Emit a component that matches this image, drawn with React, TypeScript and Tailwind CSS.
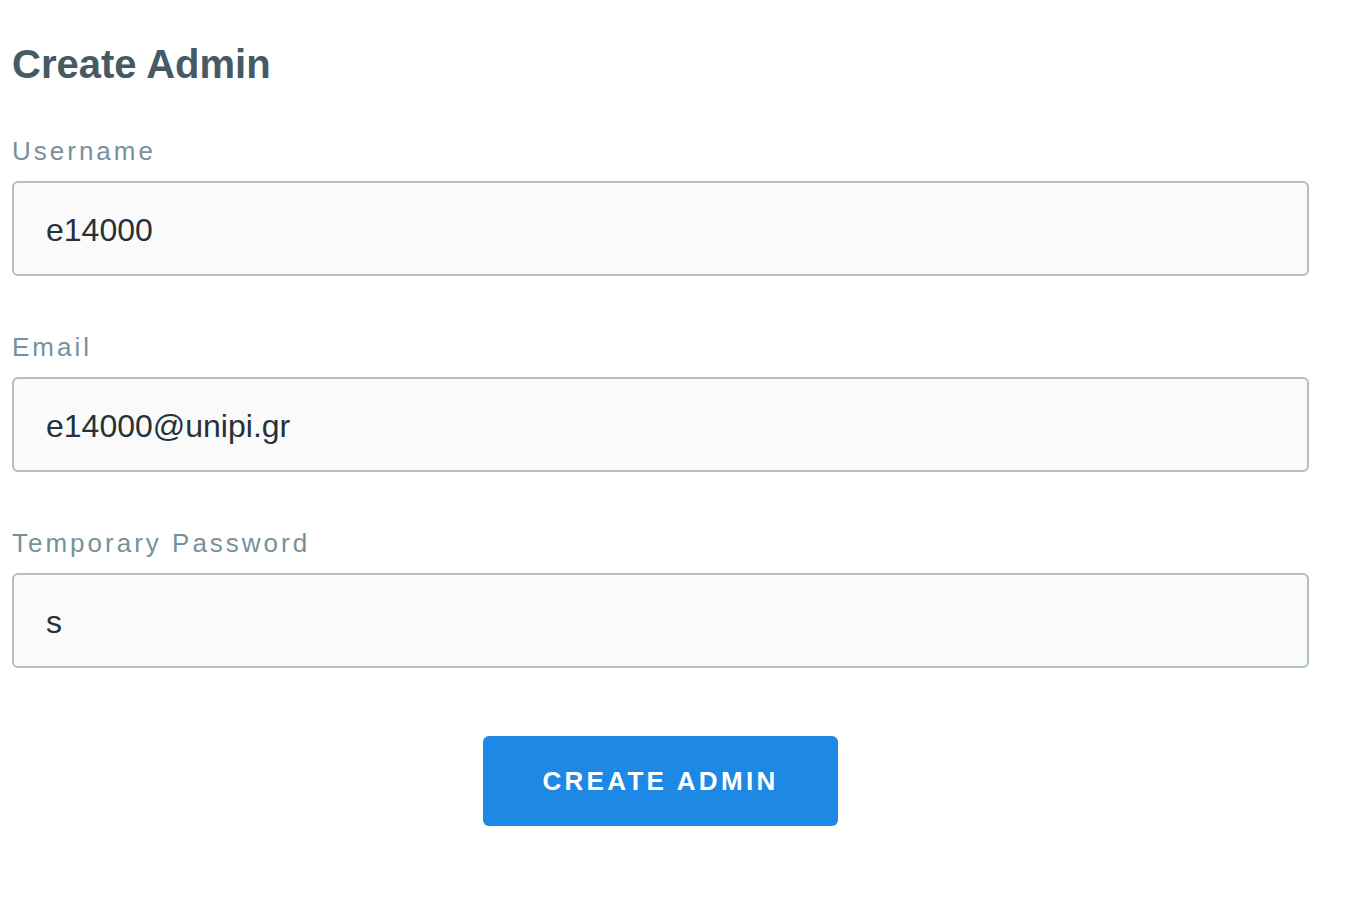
import { FunctionComponent } from "react";

const fields = [
  { label: "Username", value: "e14000" },
  { label: "Email", value: "e14000@unipi.gr" },
  { label: "Temporary Password", value: "s" },
];

const App: FunctionComponent = () => {
  return (
    <div className="w-full min-h-[910px] bg-white font-['Liberation_Sans',Arial,sans-serif]">
      <div className="w-[1297px] ml-[12px] pt-[44px] flex flex-col">
        <h1 className="text-[40px] leading-[40px] font-bold text-[#455a64]">Create Admin</h1>
        <div className="mt-[54px] flex flex-col gap-[58px]">
          {fields.map((f) => (
            <div key={f.label} className="flex flex-col gap-[17px]">
              <label className="text-[26px] leading-[26px] tracking-[3px] text-[#78909c]">{f.label}</label>
              <input
                readOnly
                value={f.value}
                className="h-[95px] w-full rounded-[6px] border-2 border-[#b0bec5] bg-[#fafafa] pl-[32px] pt-[3px] text-[32px] text-[#263238] outline-none"
              />
            </div>
          ))}
        </div>
        <div className="mt-[68px] flex justify-center">
          <button className="w-[355px] h-[90px] rounded-[6px] bg-[#1e88e5] text-white text-[26px] font-bold tracking-[3.3px] uppercase">
            Create Admin
          </button>
        </div>
      </div>
    </div>
  );
};

export default App;
